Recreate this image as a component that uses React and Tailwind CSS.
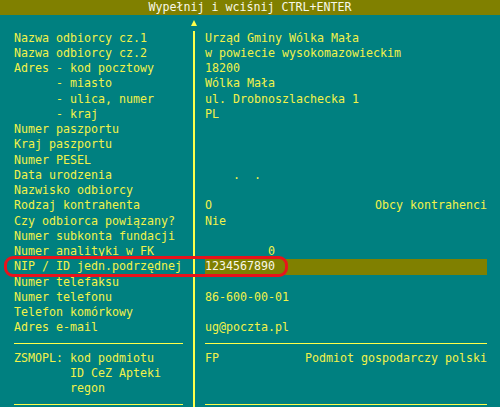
import React from "react";

const rows = [
  { label: "Nazwa odbiorcy cz.1", value: "Urząd Gminy Wólka Mała" },
  { label: "Nazwa odbiorcy cz.2", value: "w powiecie wysokomazowieckim" },
  { label: "Adres - kod pocztowy", value: "18200" },
  { label: "      - miasto", value: "Wólka Mała" },
  { label: "      - ulica, numer", value: "ul. Drobnoszlachecka 1" },
  { label: "      - kraj", value: "PL" },
  { label: "Numer paszportu", value: "" },
  { label: "Kraj paszportu", value: "" },
  { label: "Numer PESEL", value: "" },
  { label: "Data urodzenia", value: "    .  ." },
  { label: "Nazwisko odbiorcy", value: "" },
  { label: "Rodzaj kontrahenta", value: "O", note: "Obcy kontrahenci" },
  { label: "Czy odbiorca powiązany?", value: "Nie" },
  { label: "Numer subkonta fundacji", value: "" },
  { label: "Numer analityki w FK", value: "         0" },
  { label: "NIP / ID jedn.podrzędnej", value: "1234567890", active: true },
  { label: "Numer telefaksu", value: "" },
  { label: "Numer telefonu", value: "86-600-00-01" },
  { label: "Telefon komórkowy", value: "" },
  { label: "Adres e-mail", value: "ug@poczta.pl" },
  { separator: true },
  { label: "ZSMOPL: kod podmiotu", value: "FP", note: "Podmiot gospodarczy polski" },
  { label: "        ID CeZ Apteki", value: "" },
  { label: "        regon", value: "" },
  { separator: true },
];

function Row({ row }) {
  if (row.separator) {
    return (
      <div className="flex h-[15.25px]">
        <div className="flex w-[193px] items-center pl-[14px] pr-[10px]">
          <div className="h-px w-full bg-[#ffff4a]" />
        </div>
        <div className="w-[2px] bg-[#ffff4a]" />
        <div className="flex w-[292px] items-center pl-[10px]">
          <div className="h-px w-[282px] bg-[#ffff4a]" />
        </div>
      </div>
    );
  }

  return (
    <div className="flex h-[15.25px] leading-[15.25px]">
      <div className="w-[193px] whitespace-pre pl-[14px]">{row.label}</div>
      <div className="w-[2px] bg-[#ffff4a]" />
      <div className="pl-[10px]">
        <div
          className={
            "flex w-[282px] justify-between whitespace-pre " +
            (row.active ? "bg-[#808000] text-[#f8f8e8]" : "")
          }
        >
          <span>{row.value}</span>
          {row.note && <span>{row.note}</span>}
        </div>
      </div>
    </div>
  );
}

export default function App() {
  return (
    <div className="relative h-[407px] w-[500px] overflow-hidden bg-[#008080] font-['DejaVu_Sans_Mono',monospace] text-[11.63px] text-[#f2f24a]">
      <div className="h-[15.25px] bg-[#808000] text-center leading-[15.25px] text-[#f8f8e8] whitespace-pre">
        Wypełnij i wciśnij CTRL+ENTER
      </div>

      <div className="flex h-[15.25px]">
        <div className="w-[193px]" />
        <div className="flex w-[2px] items-center justify-center">
          <div className="h-0 w-0 shrink-0 border-x-[3.5px] border-b-[6px] border-x-transparent border-b-[#ffff4a]" />
        </div>
      </div>

      {rows.map((row, i) => (
        <Row key={i} row={row} />
      ))}

      {/* red annotation around the active field */}
      <div className="pointer-events-none absolute left-[4px] top-[256px] h-[21px] w-[284px] rounded-[9px] border-[3px] border-[#e8131b]" />
    </div>
  );
}
